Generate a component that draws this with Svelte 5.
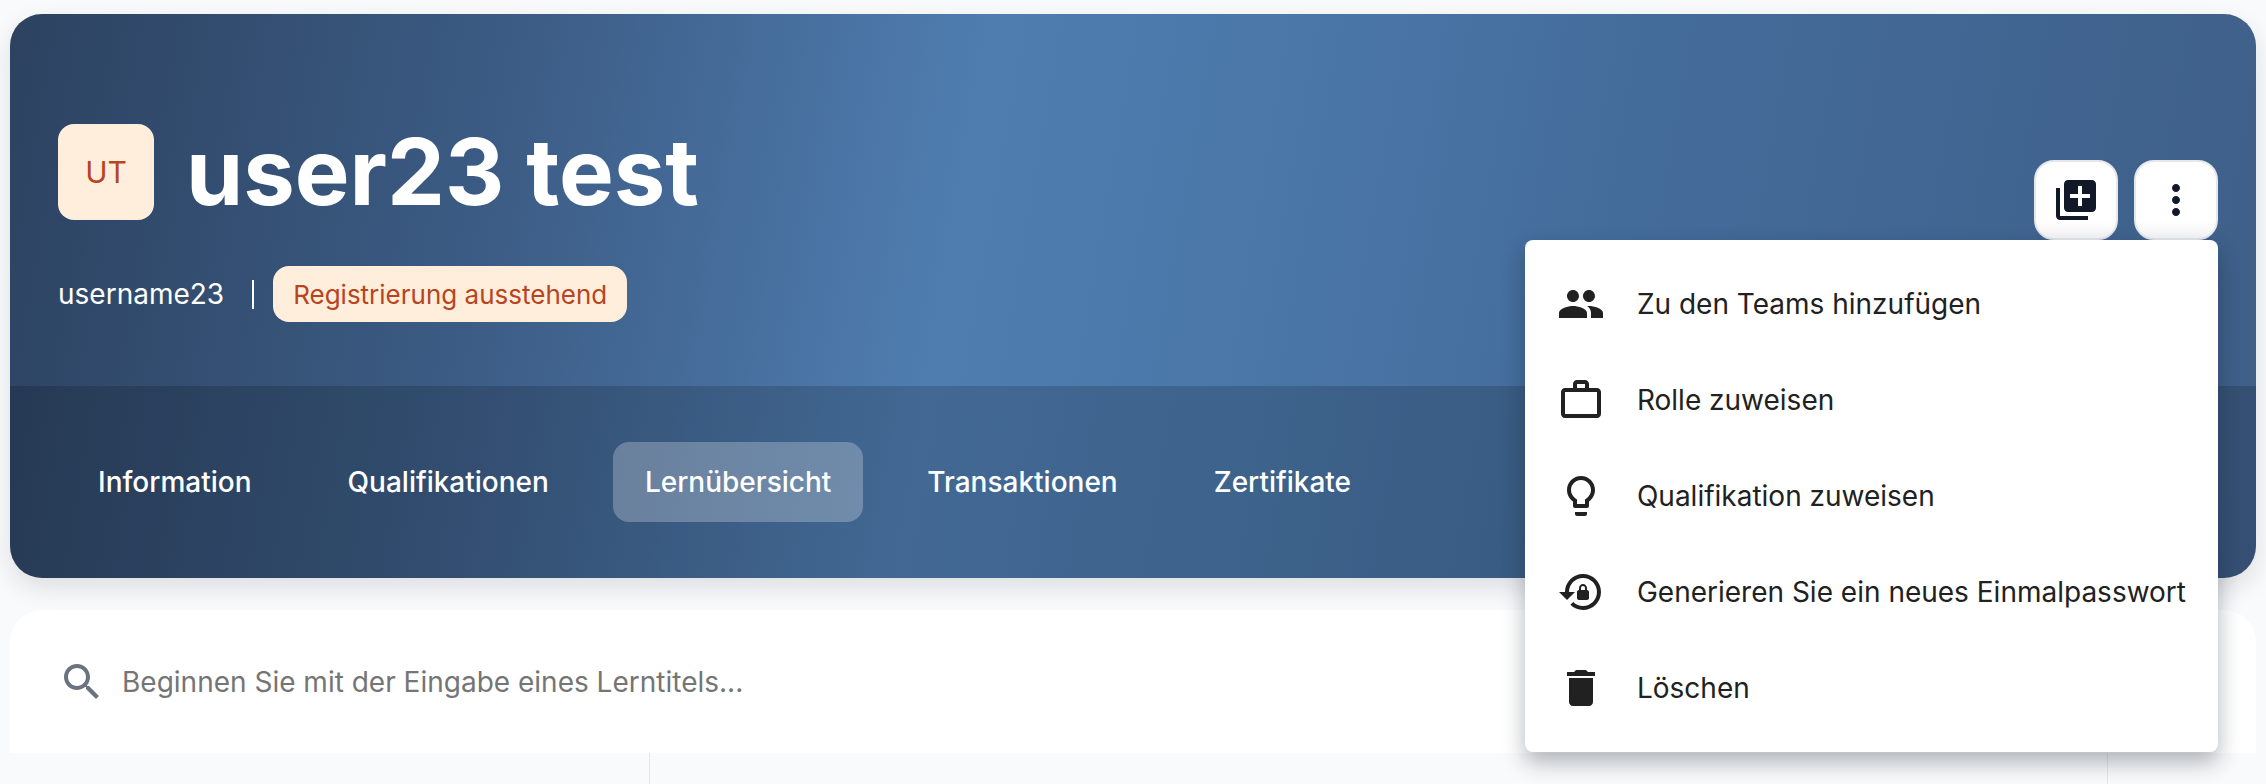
<script>
    const tabs = ["Information", "Qualifikationen", "Lernübersicht", "Transaktionen", "Zertifikate"];

    const menu = [
        { label: "Zu den Teams hinzufügen", d: "M16 11c1.66 0 2.99-1.34 2.99-3S17.66 5 16 5c-1.66 0-3 1.34-3 3s1.34 3 3 3zm-8 0c1.66 0 2.99-1.34 2.99-3S9.66 5 8 5C6.34 5 5 6.34 5 8s1.34 3 3 3zm0 2c-2.33 0-7 1.17-7 3.5V19h14v-2.5c0-2.33-4.67-3.5-7-3.5zm8 0c-.29 0-.62.02-.97.05 1.16.84 1.97 1.97 1.97 3.45V19h6v-2.5c0-2.33-4.67-3.5-7-3.5z" },
        { label: "Rolle zuweisen", d: "M14 6V4h-4v2h4zM4 8v11h16V8H4zm16-2c1.11 0 2 .89 2 2v11c0 1.11-.89 2-2 2H4c-1.11 0-2-.89-2-2l.01-11c0-1.11.88-2 1.99-2h4V4c0-1.11.89-2 2-2h4c1.11 0 2 .89 2 2v2h4z" },
        { label: "Qualifikation zuweisen", d: "M9 21c0 .55.45 1 1 1h4c.55 0 1-.45 1-1v-1H9v1zm3-19C8.14 2 5 5.14 5 9c0 2.38 1.19 4.47 3 5.74V17c0 .55.45 1 1 1h6c.55 0 1-.45 1-1v-2.26c1.81-1.27 3-3.36 3-5.74 0-3.86-3.14-7-7-7zm2.85 11.1l-.85.6V16h-4v-2.3l-.85-.6C7.8 12.16 7 10.63 7 9c0-2.76 2.24-5 5-5s5 2.24 5 5c0 1.63-.8 3.16-2.15 4.1z" },
        { label: "Generieren Sie ein neues Einmalpasswort", d: "M13 3c-4.97 0-9 4.03-9 9H1l4 4 4-4H6c0-3.86 3.14-7 7-7s7 3.14 7 7-3.14 7-7 7c-1.9 0-3.62-.76-4.88-1.99L6.7 18.42C8.32 20.01 10.55 21 13 21c4.97 0 9-4.03 9-9s-4.03-9-9-9zm2 8v-1c0-1.1-.9-2-2-2s-2 .9-2 2v1c-.55 0-1 .45-1 1v3c0 .55.45 1 1 1h4c.55 0 1-.45 1-1v-3c0-.55-.45-1-1-1zm-1 0h-2v-1c0-.55.45-1 1-1s1 .45 1 1v1z" },
        { label: "Löschen", d: "M6 19c0 1.1.9 2 2 2h8c1.1 0 2-.9 2-2V7H6v12zM19 4h-3.5l-1-1h-5l-1 1H5v2h14V4z" }
    ];
</script>

<div class="page">
    <header class="hero">
        <div class="top">
            <div class="who">
                <div class="name-row">
                    <div class="avatar">UT</div>
                    <h1>user23 test</h1>
                </div>
                <div class="sub-row">
                    <span class="username">username23</span>
                    <span class="pipe"></span>
                    <span class="badge">Registrierung ausstehend</span>
                </div>
            </div>
            <div class="actions">
                <button class="icon-btn" aria-label="Hinzufügen">
                    <svg viewBox="0 0 24 24" width="48" height="48"><path d="M4 6H2v14c0 1.1.9 2 2 2h14v-2H4V6zm16-4H8c-1.1 0-2 .9-2 2v12c0 1.1.9 2 2 2h12c1.1 0 2-.9 2-2V4c0-1.1-.9-2-2-2zm-1 9h-4v4h-2v-4H9V9h4V5h2v4h4v2z" /></svg>
                </button>
                <button class="icon-btn" aria-label="Mehr">
                    <svg viewBox="0 0 24 24" width="48" height="48"><path d="M12 8c1.1 0 2-.9 2-2s-.9-2-2-2-2 .9-2 2 .9 2 2 2zm0 2c-1.1 0-2 .9-2 2s.9 2 2 2 2-.9 2-2-.9-2-2-2zm0 6c-1.1 0-2 .9-2 2s.9 2 2 2 2-.9 2-2-.9-2-2-2z" /></svg>
                </button>
            </div>
        </div>
        <nav class="tabs">
            {#each tabs as tab}
                <span class="tab" class:active={tab === "Lernübersicht"}>{tab}</span>
            {/each}
        </nav>
    </header>

    <section class="card">
        <div class="search">
            <svg viewBox="0 0 24 24" width="48" height="48"><path d="M15.5 14h-.79l-.28-.27C15.41 12.59 16 11.11 16 9.5 16 5.91 13.09 3 9.5 3S3 5.91 3 9.5 5.91 16 9.5 16c1.61 0 3.09-.59 4.23-1.57l.27.28v.79l5 4.99L20.49 19l-4.99-5zm-6 0C7.01 14 5 11.99 5 9.5S7.01 5 9.5 5 14 7.01 14 9.5 11.99 14 9.5 14z" /></svg>
            <span>Beginnen Sie mit der Eingabe eines Lerntitels...</span>
        </div>
        <div class="table-head">
            <div class="col first"></div>
            <div class="col middle"></div>
            <div class="col"></div>
        </div>
    </section>

    <div class="menu">
        {#each menu as item}
            <div class="menu-item">
                <svg viewBox="0 0 24 24" width="48" height="48"><path d={item.d} /></svg>
                <span>{item.label}</span>
            </div>
        {/each}
    </div>
</div>

<style>
    :global(body) {
        margin: 0;
        background: #f9fafb;
        overflow: hidden;
    }

    .page {
        position: relative;
        height: 784px;
        padding: 14px 10px 0;
        box-sizing: border-box;
        overflow: hidden;
        font-family: Inter, "Liberation Sans", sans-serif;
    }

    .hero {
        height: 564px;
        border-radius: 32px;
        background: linear-gradient(100deg, #2c4260 0%, #3c5c85 22%, #4f7db0 42%, #4a77a8 55%, #446c9b 70%, #3e5f88 100%);
        box-shadow: 0 10px 24px rgba(17, 24, 39, 0.12);
        display: flex;
        flex-direction: column;
        overflow: hidden;
    }

    .top {
        height: 372px;
        box-sizing: border-box;
        padding: 110px 38px 0 48px;
        display: flex;
        justify-content: space-between;
    }

    .name-row {
        display: flex;
        align-items: center;
        gap: 32px;
    }

    .avatar {
        width: 96px;
        height: 96px;
        border-radius: 16px;
        background: #ffeedb;
        color: #b7451f;
        font-size: 30px;
        display: flex;
        align-items: center;
        justify-content: center;
    }

    h1 {
        margin: 0;
        color: #fff;
        font-size: 92px;
        line-height: 96px;
        font-weight: 700;
    }

    .sub-row {
        display: flex;
        align-items: center;
        margin-top: 46px;
        color: #fff;
        font-size: 28px;
    }

    .pipe {
        width: 2px;
        height: 29px;
        margin: 0 19px 0 28px;
        background: #fff;
    }

    .badge {
        height: 56px;
        padding: 0 20px;
        border-radius: 16px;
        background: #ffeedb;
        color: #b7451f;
        font-size: 26px;
        display: flex;
        align-items: center;
    }

    .actions {
        display: flex;
        gap: 16px;
        margin-top: 36px;
    }

    .icon-btn {
        width: 84px;
        height: 80px;
        padding: 0;
        border: 2px solid #e5e7eb;
        border-radius: 20px;
        background: linear-gradient(#fff 75%, #f6f6f8);
        display: flex;
        align-items: center;
        justify-content: center;
    }

    .icon-btn svg {
        fill: #111827;
    }

    .tabs {
        flex: 1;
        display: flex;
        align-items: center;
        gap: 32px;
        padding-left: 56px;
        background: rgba(0, 0, 0, 0.16);
    }

    .tab {
        height: 80px;
        padding: 0 32px;
        border-radius: 16px;
        color: #fff;
        font-size: 28px;
        font-weight: 500;
        display: flex;
        align-items: center;
    }

    .tab.active {
        background: rgba(255, 255, 255, 0.25);
    }

    .card {
        margin-top: 32px;
        height: 400px;
        border-radius: 32px 32px 0 0;
        background: #fff;
        overflow: hidden;
    }

    .search {
        display: flex;
        align-items: center;
        gap: 16px;
        padding: 48px 48px 47px;
        color: #757575;
        font-size: 28px;
    }

    .search svg {
        fill: #6b7280;
    }

    .table-head {
        display: flex;
        height: 100%;
        background: #f9fafb;
    }

    .col {
        flex: 1;
    }

    .col.first {
        flex: none;
        width: 639px;
        border-right: 1px solid #e5e7eb;
    }

    .col.middle {
        flex: none;
        width: 1457px;
        border-right: 1px solid #e5e7eb;
    }

    .menu {
        position: absolute;
        top: 240px;
        right: 48px;
        padding: 16px 0;
        border-radius: 8px;
        background: #fff;
        box-shadow: 0 10px 22px rgba(17, 24, 39, 0.32);
    }

    .menu-item {
        height: 96px;
        padding: 0 32px;
        display: flex;
        align-items: center;
        gap: 32px;
        color: #212121;
        font-size: 28px;
        white-space: nowrap;
    }

    .menu-item svg {
        fill: #212121;
        flex: none;
    }
</style>
